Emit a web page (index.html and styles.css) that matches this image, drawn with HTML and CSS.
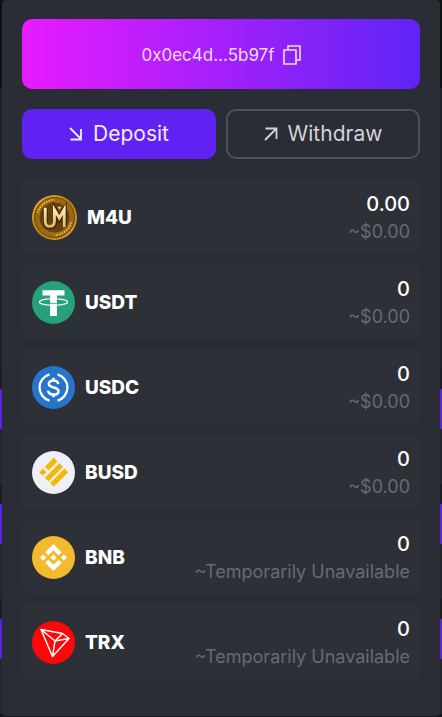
FILE: index.html
```html
<!DOCTYPE html>
<html lang="en">
<head>
    <meta charset="UTF-8">
    <meta name="viewport" content="width=device-width, initial-scale=1.0">
    <title>Wallet</title>
    <link rel="stylesheet" href="styles.css">
</head>
<body>
    <!-- Page behind the wallet -->
    <div class="backdrop" aria-hidden="true">
        <div class="backdrop-header"></div>
        <div class="backdrop-intro"></div>
        <div class="backdrop-card">
            <div class="backdrop-bar"></div>
        </div>
        <div class="backdrop-card">
            <div class="backdrop-bar"></div>
        </div>
        <div class="backdrop-card">
            <div class="backdrop-bar"></div>
        </div>
    </div>

    <main class="wallet">
        <button class="address" type="button">
            <span>0x0ec4d...5b97f</span>
            <svg class="copy-icon" viewBox="0 0 18 20" fill="none" stroke="currentColor" stroke-width="1.6" aria-hidden="true">
                <path d="M1 5h12v14H1z"/>
                <path d="M5 5V1h12v14h-4"/>
            </svg>
        </button>

        <div class="actions">
            <button class="button button-primary" type="button">
                <svg class="arrow-icon" viewBox="0 0 14 14" fill="none" stroke="currentColor" stroke-width="1.8" aria-hidden="true">
                    <path d="M1 1l11 11M12 2v10.5H1.5"/>
                </svg>
                Deposit
            </button>
            <button class="button button-outline" type="button">
                <svg class="arrow-icon" viewBox="0 0 14 14" fill="none" stroke="currentColor" stroke-width="1.8" aria-hidden="true">
                    <path d="M1 13L12.5 1.5M1.5 1.5H12.5V12"/>
                </svg>
                Withdraw
            </button>
        </div>

        <ul class="coins">
            <li class="coin">
                <svg class="coin-icon coin-icon-large" viewBox="0 0 46 46" aria-hidden="true">
                    <defs>
                        <linearGradient id="goldRim" x1="0" y1="0" x2="1" y2="1">
                            <stop offset="0" stop-color="#f0bd36"/>
                            <stop offset="0.5" stop-color="#b87b0c"/>
                            <stop offset="1" stop-color="#e0a526"/>
                        </linearGradient>
                        <linearGradient id="goldMark" x1="0" y1="0" x2="0" y2="1">
                            <stop offset="0" stop-color="#fff0b0"/>
                            <stop offset="1" stop-color="#e3b659"/>
                        </linearGradient>
                    </defs>
                    <circle cx="23" cy="23" r="23" fill="url(#goldRim)"/>
                    <circle cx="23" cy="23" r="20.5" fill="#9b6810" stroke="#6b430a" stroke-width="1"/>
                    <circle cx="23" cy="23" r="16" fill="#684110" stroke="#ad7b25" stroke-width="0.8"/>
                    <path d="M5.8 18A18 18 0 0 1 23 5" fill="none" stroke="#ecc768" stroke-width="1.8" stroke-dasharray="1.5 1.3"/>
                    <path d="M40.2 28A18 18 0 0 1 23 41" fill="none" stroke="#ecc768" stroke-width="1.8" stroke-dasharray="1.5 1.3"/>
                    <path d="M13.5 13v14q0 5.500 5 5.500t5-5.500V16l4.500 8 5-8v17" fill="none" stroke="#3a2206" stroke-width="5"/>
                    <path d="M13.500 13v13.500q0 5.500 4.700 5.500t4.700-5.500V15l5 8.500 5-8.500v18" fill="none" stroke="url(#goldMark)" stroke-width="3"/>
                    <path d="M26 12h4l-2 3z" fill="#f3d588"/>
                </svg>
                <span class="coin-name">M4U</span>
                <div class="coin-balance">
                    <div class="amount">0.00</div>
                    <div class="value">~$0.00</div>
                </div>
            </li>
            <li class="coin">
                <svg class="coin-icon" viewBox="0 0 43 43" aria-hidden="true">
                    <circle cx="21.5" cy="21.5" r="21.5" fill="#26a17b"/>
                    <ellipse cx="21.5" cy="21" rx="14" ry="3.2" fill="none" stroke="#fff" stroke-width="1.1"/>
                    <path d="M10.5 9.2h22v5.200h-7.600V35h-6.800V14.400h-7.600z" fill="#fff"/>
                    <path d="M18.100 22.200q3.400.4 6.800 0" fill="none" stroke="#26a17b" stroke-width="0.900"/>
                </svg>
                <span class="coin-name">USDT</span>
                <div class="coin-balance">
                    <div class="amount">0</div>
                    <div class="value">~$0.00</div>
                </div>
            </li>
            <li class="coin">
                <svg class="coin-icon" viewBox="0 0 32 32" aria-hidden="true">
                    <circle cx="16" cy="16" r="16" fill="#2775ca"/>
                    <g fill="none" stroke="#fff" stroke-width="1.7">
                        <path d="M13 6.200a10.200 10.200 0 0 0 0 19.600M19 6.200a10.200 10.200 0 0 1 0 19.600"/>
                        <path stroke-width="1.9" d="M19.500 13.500c-.2-1.900-1.500-2.700-3.500-2.700-2.100 0-3.500 1-3.500 2.500 0 3.700 7.200 1.700 7.200 5.400 0 1.600-1.500 2.600-3.700 2.600-2.300 0-3.800-1-4-2.900M16 8.800v2.500M16 20.800v2.500"/>
                    </g>
                </svg>
                <span class="coin-name">USDC</span>
                <div class="coin-balance">
                    <div class="amount">0</div>
                    <div class="value">~$0.00</div>
                </div>
            </li>
            <li class="coin">
                <svg class="coin-icon" viewBox="0 0 43 43" aria-hidden="true">
                    <circle cx="21.5" cy="21.5" r="21.5" fill="#eef0f6"/>
                    <g fill="#f0b90b">
                        <path d="M21.75 6.750l3.750 3.750-9 9-3.750-3.750z"/>
                        <path d="M27.250 12.250L31 16 16.500 30.500l-3.750-3.750z"/>
                        <path d="M32.500 17.500l3.750 3.750-14.500 14.500L18 32z"/>
                        <path d="M10.900 17.600l3.600 3.600-3.600 3.600-3.600-3.600z"/>
                    </g>
                </svg>
                <span class="coin-name">BUSD</span>
                <div class="coin-balance">
                    <div class="amount">0</div>
                    <div class="value">~$0.00</div>
                </div>
            </li>
            <li class="coin">
                <svg class="coin-icon" viewBox="0 0 32 32" aria-hidden="true">
                    <circle cx="16" cy="16" r="16" fill="#f3ba2f"/>
                    <path fill="#fff" d="M12.116 14.404L16 10.520l3.886 3.886 2.260-2.260L16 6l-6.144 6.144 2.260 2.260zM6 16l2.260-2.260L10.520 16l-2.260 2.260L6 16zm6.116 1.596L16 21.480l3.886-3.886 2.260 2.259L16 26l-6.144-6.144-.003-.003 2.263-2.257zM21.480 16l2.260-2.260L26 16l-2.260 2.260L21.480 16zm-3.188-.002h.002V16L16 18.294l-2.291-2.290-.004-.004.004-.003.401-.402.195-.195L16 13.706l2.293 2.293z"/>
                </svg>
                <span class="coin-name">BNB</span>
                <div class="coin-balance">
                    <div class="amount">0</div>
                    <div class="value">~Temporarily Unavailable</div>
                </div>
            </li>
            <li class="coin">
                <svg class="coin-icon" viewBox="0 0 43 43" aria-hidden="true">
                    <circle cx="21.5" cy="21.5" r="21.5" fill="#ff060a"/>
                    <path d="M9 8.500l21.500 4L37 17.500 20.500 35.500zM9 8.500l14 11.500L30.500 12.500M23 20L37 17.500M23 20L20.500 35.500" fill="none" stroke="#fff" stroke-width="1.5" stroke-linejoin="round"/>
                </svg>
                <span class="coin-name">TRX</span>
                <div class="coin-balance">
                    <div class="amount">0</div>
                    <div class="value">~Temporarily Unavailable</div>
                </div>
            </li>
        </ul>
    </main>
</body>
</html>
```
FILE: styles.css
```css
* {
    box-sizing: border-box;
}
body {
    margin: 0;
    min-height: 100vh;
    font-family: Inter, sans-serif;
    background-color: #17181c;
    color: #fff;
    position: relative;
}
/* Page behind the wallet */
.backdrop {
    position: absolute;
    inset: 0;
    overflow: hidden;
}
.backdrop-header {
    height: 88px;
    background-color: #0e0f11;
}
.backdrop-intro {
    height: 281px;
    background-color: #1e2127;
}
.backdrop-card {
    height: 115px;
    padding-top: 20px;
    background-color: #1b1d22;
    border-bottom: 55px solid #24272e;
}
.backdrop-bar {
    height: 40px;
    background-color: #5a23e0;
}
/* Wallet */
.wallet {
    position: relative;
    display: flex;
    flex-direction: column;
    gap: 20px;
    min-height: calc(100vh - 1px);
    margin: 0 2px;
    padding: 19px 20px 20px;
    background-color: #2a2d35;
    border-radius: 4px;
}
.address {
    display: flex;
    align-items: center;
    justify-content: center;
    gap: 8px;
    height: 70px;
    padding: 2px 20px 0;
    border: none;
    border-radius: 10px;
    background: linear-gradient(to right, #e81cff, #5f24f5);
    color: #f3dcff;
    font-family: inherit;
    font-size: 17px;
    line-height: 26px;
    cursor: pointer;
}
.copy-icon {
    width: 18px;
    height: 20px;
}
.actions {
    display: grid;
    grid-template-columns: 1fr 1fr;
    gap: 10px;
}
.button {
    display: flex;
    align-items: center;
    justify-content: center;
    gap: 10px;
    height: 50px;
    border: 2px solid transparent;
    border-radius: 10px;
    font-family: inherit;
    font-size: 21px;
    line-height: 30px;
    cursor: pointer;
}
.button-primary {
    background-color: #6022f3;
    border-color: #6022f3;
    color: #f0eaff;
}
.button-outline {
    background-color: transparent;
    border-color: #4b5060;
    color: #d0d3d8;
}
.arrow-icon {
    width: 14px;
    height: 14px;
}
.coins {
    display: flex;
    flex-direction: column;
    gap: 10px;
    margin: 0;
    padding: 0;
    list-style: none;
}
.coin {
    display: flex;
    align-items: center;
    gap: 10px;
    padding: 11px 10px 9px;
    background-color: #2d3037;
    border-radius: 5px;
}
.coin-icon {
    flex: none;
    width: 43px;
    height: 43px;
}
.coin-icon-large {
    width: 45px;
    height: 45px;
}
.coin-name {
    font-size: 19px;
    font-weight: 800;
    line-height: 28px;
}
.coin-balance {
    margin-left: auto;
    text-align: right;
}
.amount {
    font-size: 20px;
    font-weight: 500;
    line-height: 28px;
}
.value {
    color: #666a75;
    font-size: 18px;
    line-height: 27px;
}
```
